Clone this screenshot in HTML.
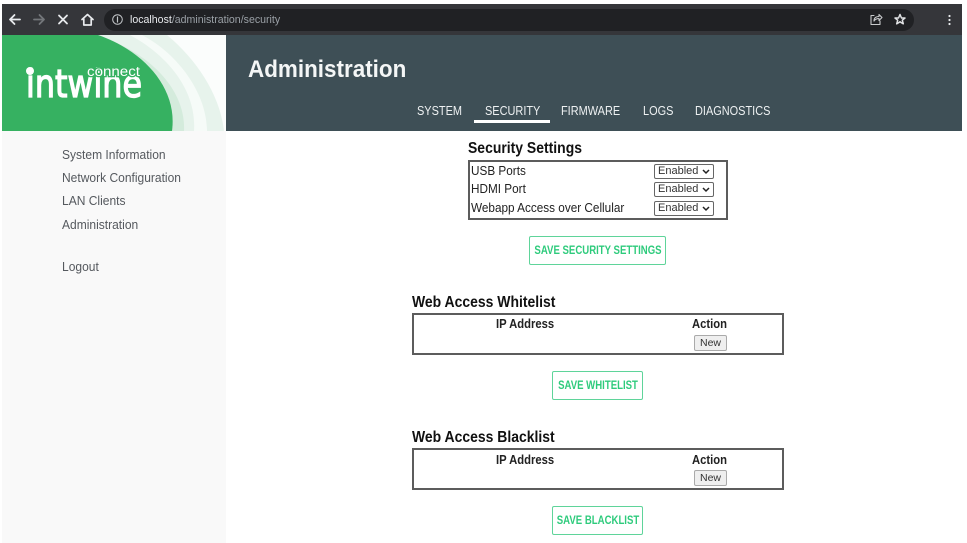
<!DOCTYPE html>
<html><head><meta charset="utf-8">
<style>
html,body{margin:0;padding:0;background:#fff;overflow:hidden}
body{width:967px;height:543px;position:relative;font-family:"Liberation Sans",sans-serif;color:#111}
.a{position:absolute;white-space:nowrap}
.nav{top:103px;font-size:13px;line-height:16px;color:#eef1f2;transform:scaleX(.842);transform-origin:0 0}
.side{left:62px;font-size:13px;line-height:16px;color:#55595e;transform:scaleX(.925);transform-origin:0 0}
h2{position:absolute;margin:0;font-size:16px;line-height:18px;font-weight:bold;color:#111;white-space:nowrap;transform:scaleX(.872);transform-origin:0 0}
.box{position:absolute;box-sizing:border-box;border:2px solid #5c5c5c;background:#fff}
.t{position:absolute;font-size:12.5px;line-height:14px;color:#222;white-space:nowrap;transform:scaleX(.94);transform-origin:0 0}
.th{position:absolute;font-size:12.5px;line-height:14px;font-weight:bold;color:#222;white-space:nowrap;transform:scaleX(.9);transform-origin:0 0}
.sel{position:absolute;left:654px;width:60px;height:15px;box-sizing:border-box;border:1px solid #666;border-radius:2px;background:#fff;font-size:11px;line-height:13px;color:#333;padding-left:3px}
.sel svg{position:absolute;right:3px;top:4px}
.btn{position:absolute;box-sizing:border-box;height:29px;border:1px solid #5fd49a;border-radius:2px;background:#fff;color:#2ecb7c;font-size:12px;font-weight:bold;line-height:27px;white-space:nowrap}
.btn span{position:absolute;left:50%;top:0;transform:translateX(-50%) scaleX(.8)}
.new{position:absolute;left:694px;width:33px;height:16px;box-sizing:border-box;border:1px solid #aaa;border-radius:2px;background:#efefef;font-size:10.5px;line-height:14px;text-align:center;color:#333}
</style></head><body>

<!-- browser bar -->
<div class="a" style="left:2px;top:4px;width:960px;height:31px;background:#35363a"></div>
<div class="a" style="left:104px;top:9px;width:810px;height:22px;border-radius:11px;background:#202124"></div>
<svg class="a" style="left:0;top:4px" width="130" height="31" fill="none" stroke-linecap="round" stroke-linejoin="round">
<path d="M20 15.500H10M14.500 11L10 15.500L14.500 20" stroke="#e8eaed" stroke-width="1.800"/>
<path d="M34 15.500H44M39.500 11L44 15.500L39.500 20" stroke="#73767a" stroke-width="1.800"/>
<path d="M59 11.500L67 19.500M67 11.500L59 19.500" stroke="#e8eaed" stroke-width="1.800"/>
<path d="M82 15.500L87.500 10.500L93 15.500M83.800 15V21H91.200V15" stroke="#e8eaed" stroke-width="1.700"/>
<circle cx="117.500" cy="15.500" r="4.800" stroke="#c4c7ca" stroke-width="1"/>
<path d="M117.500 13V18" stroke="#c4c7ca" stroke-width="1.200"/>
</svg>
<div class="a" style="left:130px;top:13px;font-size:10.6px;line-height:14px;color:#9aa0a6"><span style="color:#e8eaed">localhost</span>/administration/security</div>
<svg class="a" style="left:865px;top:9px" width="90" height="22" fill="none" stroke-linecap="round" stroke-linejoin="round">
<path d="M9 6.500H6V15.500H15V12M9 12C9 9 11 7.500 14 7.500V5.500L17 8.500L14 11.500V9.500C12 9.500 10.500 10 9 12Z" stroke="#c8cacc" stroke-width="1.100"/>
<path d="M35 5.500L36.500 9H40L37.300 11.200L38.300 14.800L35 12.800L31.700 14.800L32.700 11.200L30 9H33.500Z" stroke="#dfe1e3" stroke-width="1.500"/>
<circle cx="84.500" cy="7" r="1.100" fill="#e8eaed"/><circle cx="84.500" cy="11" r="1.100" fill="#e8eaed"/><circle cx="84.500" cy="15" r="1.100" fill="#e8eaed"/>
</svg>

<!-- sidebar -->
<div class="a" style="left:2px;top:131px;width:224px;height:412px;background:#f9f9f9"></div>

<!-- logo -->
<svg class="a" style="left:2px;top:35px" width="224" height="96">
<rect width="224" height="96" fill="#fbfdfc"/>
<path d="M165 0C195 25 218 60 222 96H0V0Z" fill="#e7f3ec"/>
<path d="M128 0C165 20 195 55 192 96H205C205 60 178 20 140 0Z" fill="#f6fbf8"/>
<path d="M96 1C140 14 184 50 182 96H0V1Z" fill="#d4ebdc"/>
<path d="M0 0H96C140 15 176 52 170 96H0Z" fill="#36b161"/>
<text x="24" y="62" font-family="DejaVu Sans,sans-serif" font-size="38" fill="#fff" stroke="#fff" stroke-width="1.300" textLength="116" lengthAdjust="spacingAndGlyphs">intwine</text>
<text x="85" y="41" font-family="Liberation Sans,sans-serif" font-size="13.500" fill="#fff" stroke="#36b161" stroke-width="2.500" paint-order="stroke" textLength="53" lengthAdjust="spacingAndGlyphs">connect</text>
<circle cx="28" cy="36" r="4" fill="#fff"/>
</svg>

<!-- header -->
<div class="a" style="left:226px;top:35px;width:736px;height:96px;background:#3e4f56"></div>
<div class="a" style="left:248px;top:55px;font-size:24px;line-height:30px;font-weight:bold;color:#f4f6f6;transform:scaleX(.935);transform-origin:0 0">Administration</div>
<div class="a nav" style="left:417px">SYSTEM</div>
<div class="a nav" style="left:485px">SECURITY</div>
<div class="a" style="left:474px;top:120px;width:76px;height:3px;background:#fff"></div>
<div class="a nav" style="left:561px">FIRMWARE</div>
<div class="a nav" style="left:643px">LOGS</div>
<div class="a nav" style="left:695px">DIAGNOSTICS</div>

<!-- side nav -->
<div class="a side" style="top:147px">System Information</div>
<div class="a side" style="top:170px">Network Configuration</div>
<div class="a side" style="top:193px">LAN Clients</div>
<div class="a side" style="top:217px">Administration</div>
<div class="a side" style="top:259px">Logout</div>

<!-- security -->
<h2 style="left:468px;top:140px">Security Settings</h2>
<div class="box" style="left:468px;top:160px;width:260px;height:60px"></div>
<div class="t" style="left:471px;top:164px">USB Ports</div>
<div class="t" style="left:471px;top:182px">HDMI Port</div>
<div class="t" style="left:471px;top:201px">Webapp Access over Cellular</div>
<div class="sel" style="top:164px">Enabled<svg width="8" height="6" fill="none"><path d="M1 1L4 4L7 1" stroke="#222" stroke-width="1.500"/></svg></div>
<div class="sel" style="top:182px">Enabled<svg width="8" height="6" fill="none"><path d="M1 1L4 4L7 1" stroke="#222" stroke-width="1.500"/></svg></div>
<div class="sel" style="top:201px">Enabled<svg width="8" height="6" fill="none"><path d="M1 1L4 4L7 1" stroke="#222" stroke-width="1.500"/></svg></div>
<div class="btn" style="left:529px;top:236px;width:137px"><span>SAVE SECURITY SETTINGS</span></div>

<!-- whitelist -->
<h2 style="left:412px;top:294px">Web Access Whitelist</h2>
<div class="box" style="left:412px;top:313px;width:372px;height:42px"></div>
<div class="th" style="left:496px;top:317px">IP Address</div>
<div class="th" style="left:691.500px;top:317px">Action</div>
<div class="new" style="top:335px">New</div>
<div class="btn" style="left:552px;top:371px;width:91px"><span>SAVE WHITELIST</span></div>

<!-- blacklist -->
<h2 style="left:412px;top:429px">Web Access Blacklist</h2>
<div class="box" style="left:412px;top:448px;width:372px;height:42px"></div>
<div class="th" style="left:496px;top:453px">IP Address</div>
<div class="th" style="left:691.500px;top:453px">Action</div>
<div class="new" style="top:470px">New</div>
<div class="btn" style="left:552px;top:506px;width:91px"><span>SAVE BLACKLIST</span></div>

</body></html>
